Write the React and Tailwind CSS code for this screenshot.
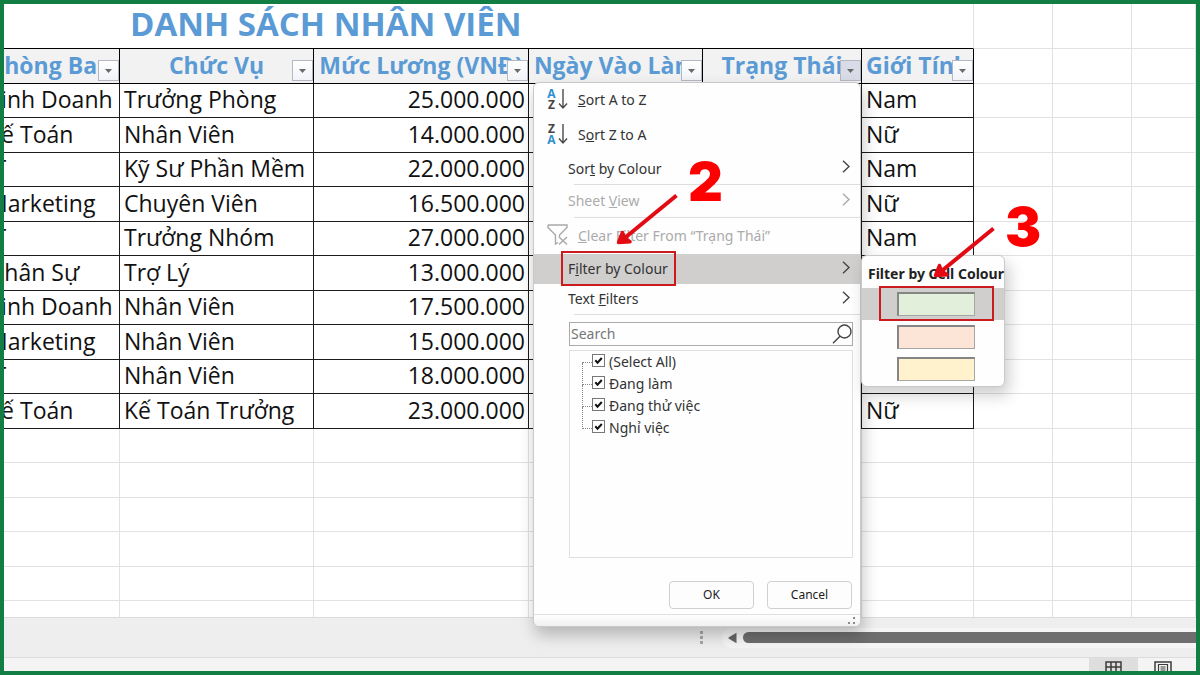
import React from "react";

const COLUMNS = [
  { label: "Phòng Ban", align: "pr-1 text-left" },
  { label: "Chức Vụ", align: "pr-1 text-left" },
  { label: "Mức Lương (VNĐ)", align: "pr-[3px] text-right" },
  { label: "Ngày Vào Làm", align: "pr-1 text-left" },
  { label: "Trạng Thái", align: "pr-1 text-left", active: true },
  { label: "Giới Tính", align: "pr-1 text-left" },
];

const ROWS = [
  ["Kinh Doanh", "Trưởng Phòng", "25.000.000", "", "", "Nam"],
  ["Kế Toán", "Nhân Viên", "14.000.000", "", "", "Nữ"],
  ["IT", "Kỹ Sư Phần Mềm", "22.000.000", "", "", "Nam"],
  ["Marketing", "Chuyên Viên", "16.500.000", "", "", "Nữ"],
  ["IT", "Trưởng Nhóm", "27.000.000", "", "", "Nam"],
  ["Nhân Sự", "Trợ Lý", "13.000.000", "", "", "Nữ"],
  ["Kinh Doanh", "Nhân Viên", "17.500.000", "", "", "Nam"],
  ["Marketing", "Nhân Viên", "15.000.000", "", "", "Nữ"],
  ["IT", "Nhân Viên", "18.000.000", "", "", "Nam"],
  ["Kế Toán", "Kế Toán Trưởng", "23.000.000", "", "", "Nữ"],
];

const STATUSES = ["(Select All)", "Đang làm", "Đang thử việc", "Nghỉ việc"];

function GridCells({ count }) {
  return Array.from({ length: count }, (_, i) => (
    <td key={i} className="border-r border-b border-[#e2e2e2] p-0" />
  ));
}

function FilterButton({ label, active }) {
  return (
    <button
      type="button"
      aria-label={`Filter ${label}`}
      className={`absolute right-0 bottom-[2px] flex h-[21px] w-[21px] items-center justify-center border border-[#b4b8c4] ${
        active ? "bg-[#d9dce6]" : "bg-linear-to-b from-white to-[#f1f3f8]"
      }`}
    >
      <svg width="7" height="4" viewBox="0 0 7 4" aria-hidden="true">
        <path d="M0 0h7L3.5 4z" fill="#6a6a6a" />
      </svg>
    </button>
  );
}

function Sheet() {
  return (
    <div className="min-h-0 flex-1 overflow-hidden bg-white">
      <table className="-ml-[21px] w-[calc(100%+21px)] table-fixed border-separate border-spacing-0 font-['Open_Sans',sans-serif] text-[23px] leading-[30px] whitespace-nowrap text-[#111]">
        <colgroup>
          <col className="w-[137px]" />
          <col className="w-[194px]" />
          <col className="w-[215px]" />
          <col className="w-[174px]" />
          <col className="w-[159px]" />
          <col className="w-[112px]" />
          <col className="w-[79px]" />
          <col className="w-[79px]" />
          <col />
        </colgroup>
        <thead>
          <tr className="h-[45px]">
            <th
              colSpan={6}
              className="border-r border-r-[#e2e2e2] border-b border-b-black p-0 pb-1 pl-[147px] text-left text-[33px] leading-10 font-bold text-[#5b9bd5]"
            >
              DANH SÁCH NHÂN VIÊN
            </th>
            <GridCells count={3} />
          </tr>
          <tr className="h-[35px]">
            {COLUMNS.map((c) => (
              <th
                key={c.label}
                className="relative border-r border-b border-black bg-[#f2f2f2] p-0 pb-[3px] text-center font-bold text-[#5b9bd5]"
              >
                {c.label}
                <FilterButton label={c.label} active={c.active} />
              </th>
            ))}
            <GridCells count={3} />
          </tr>
        </thead>
        <tbody>
          {ROWS.map((row, r) => (
            <tr key={r} className="odd:h-[34px] even:h-[35px]">
              {row.map((v, i) => (
                <td
                  key={i}
                  className={`border-r border-b border-[#1c1c1c] pt-0 pb-[3px] pl-1 ${COLUMNS[i].align}`}
                >
                  {v}
                </td>
              ))}
              <GridCells count={3} />
            </tr>
          ))}
          {[0, 1, 2, 3, 4, 5].map((r) => (
            <tr key={r} className="odd:h-[34px] even:h-[35px]">
              <GridCells count={9} />
            </tr>
          ))}
        </tbody>
      </table>
    </div>
  );
}

function BottomBars() {
  return (
    <>
      <div className="flex h-10 shrink-0 items-center border-t border-[#dcdcdc] bg-[#eeeeee]">
        <div className="flex w-[718px] shrink-0 justify-end pr-[19px]">
          <div className="flex flex-col gap-[2px]">
            <span className="h-[3px] w-[3px] bg-[#a8a8a8]" />
            <span className="h-[3px] w-[3px] bg-[#a8a8a8]" />
            <span className="h-[3px] w-[3px] bg-[#a8a8a8]" />
          </div>
        </div>
        <div className="flex h-5 flex-1 items-center gap-[6px] rounded-l-full bg-[#f5f5f5] pl-[6px]">
          <svg width="9" height="12" viewBox="0 0 9 12" aria-hidden="true">
            <path d="M8.5.8v10.4L.5 6.6V5.4z" fill="#666" />
          </svg>
          <div className="h-[11px] flex-1 rounded-l-full bg-[#6e6e6e]" />
        </div>
      </div>
      <div className="flex h-[14px] shrink-0 justify-end overflow-hidden border-t border-[#dcdcdc] bg-[#f4f4f4]">
        <button type="button" aria-label="Normal view" className="flex w-[49px] justify-center bg-[#dedede] pt-[3px]">
          <svg width="17" height="16" viewBox="0 0 17 16" fill="none" stroke="#3c3c3c" strokeWidth="1.5" aria-hidden="true">
            <path d="M1 1h15v14H1zM1 6h15M1 11h15M6 1v14M11 1v14" />
          </svg>
        </button>
        <button type="button" aria-label="Page layout" className="flex w-[58px] pt-[3px] pl-4">
          <svg width="18" height="16" viewBox="0 0 18 16" fill="none" stroke="#3c3c3c" aria-hidden="true">
            <path d="M1 1h16v14H1z" strokeWidth="1.5" />
            <path d="M4.5 15V3.5h9V15M6.5 6h5M6.5 8h5M6.5 10h5" strokeWidth="1.2" />
          </svg>
        </button>
      </div>
    </>
  );
}

function SortIcon({ top, bottom }) {
  const color = (c) => (c === "A" ? "text-[#2e8fd0]" : "text-[#444]");
  return (
    <span className="-mt-[3px] flex items-center gap-[2px]" aria-hidden="true">
      <span className="flex w-[9px] flex-col items-center font-['Open_Sans',sans-serif] text-[12px] leading-[11px] font-bold">
        <span className={color(top)}>{top}</span>
        <span className={color(bottom)}>{bottom}</span>
      </span>
      <svg width="10" height="22" viewBox="0 0 10 22" fill="none" stroke="#4a4a4a" strokeWidth="1.4">
        <path d="M5 1v19M1 15.500l4 4.500 4-4.500" />
      </svg>
    </span>
  );
}

function Chevron({ muted }) {
  return (
    <svg
      width="8"
      height="13"
      viewBox="0 0 8 13"
      fill="none"
      strokeWidth="1.4"
      className={`mr-[10px] ml-auto -mt-1 ${muted ? "stroke-[#a8a8a8]" : "stroke-[#444]"}`}
      aria-hidden="true"
    >
      <path d="M1 .8l6 5.700-6 5.700" />
    </svg>
  );
}

function MenuItem({ icon, height, muted, chevron, selected, children }) {
  return (
    <button
      type="button"
      disabled={muted}
      className={`flex w-full items-center text-left ${height} ${muted ? "text-[#ababab]" : "text-[#333]"} ${
        selected ? "bg-[#d1cfce]" : ""
      }`}
    >
      {icon ? <span className="flex w-[44px] shrink-0 pl-[13px]">{icon}</span> : <span className="w-[34px] shrink-0" />}
      <span>{children}</span>
      {chevron && <Chevron muted={muted} />}
    </button>
  );
}

function Separator() {
  return <hr className="ml-10 border-t border-[#dedede]" />;
}

function FilterMenu() {
  return (
    <div className="absolute top-[78px] left-[529px] w-[328px] rounded-md border border-[#c9c9c9] bg-[#fefefe] font-['Noto_Sans',sans-serif] text-[14px] leading-5 whitespace-nowrap shadow-[2px_8px_16px_rgba(0,0,0,0.24)]">
      <MenuItem height="h-[34px]" icon={<SortIcon top="A" bottom="Z" />}>
        <u>S</u>ort A to Z
      </MenuItem>
      <MenuItem height="h-[36px]" icon={<SortIcon top="Z" bottom="A" />}>
        S<u>o</u>rt Z to A
      </MenuItem>
      <MenuItem height="h-[31px]" chevron>
        Sor<u>t</u> by Colour
      </MenuItem>
      <Separator />
      <MenuItem height="h-[32px]" chevron muted>
        Sheet <u>V</u>iew
      </MenuItem>
      <Separator />
      <MenuItem
        height="h-[36px]"
        muted
        icon={
          <svg width="22" height="22" viewBox="0 0 22 22" fill="none" stroke="#a8a8a8" strokeWidth="1.4" className="-mt-[2px]" aria-hidden="true">
            <path d="M1 1h19v2.500l-7.500 7.500v3M1 1v2.500l7.500 7.500v9l2.500-1.500M12 13l8 7.500M20 13l-8 7.500" />
          </svg>
        }
      >
        <u>C</u>lear Filter From “Trạng Thái”
      </MenuItem>
      <MenuItem height="h-[30px]" chevron selected>
        F<u>i</u>lter by Colour
      </MenuItem>
      <MenuItem height="h-[30px]" chevron>
        Text <u>F</u>ilters
      </MenuItem>
      <Separator />
      <div className="mt-[7px] mr-[7px] ml-[35px] flex h-6 items-center border border-[#ababab]">
        <input
          type="text"
          aria-label="Search"
          placeholder="Search"
          className="w-full min-w-0 flex-1 bg-transparent pl-px text-[#333] outline-none placeholder:text-[#767676]"
        />
        <svg width="20" height="20" viewBox="0 0 20 20" fill="none" stroke="#444" strokeWidth="1.4" aria-hidden="true">
          <circle cx="12.500" cy="7.500" r="6.500" />
          <path d="M8 12.200L1 19.300" />
        </svg>
      </div>
      <ul className="mt-1 mr-[7px] ml-[35px] h-[208px] border border-[#e0e0e0] pl-3">
        {STATUSES.map((s, i) => (
          <li key={s} className="flex h-[22px] items-center">
            <span
              className={`w-[10px] self-start border-b border-dotted border-[#888] ${
                i === 0 ? "h-3" : "-mt-[10px] h-[22px] border-l"
              }`}
            />
            <label className="flex items-center gap-1">
              <span className="-mt-1 grid">
                <input
                  type="checkbox"
                  defaultChecked
                  className="peer col-start-1 row-start-1 h-[13px] w-[13px] appearance-none border border-[#777] bg-white"
                />
                <svg
                  viewBox="0 0 13 13"
                  className="pointer-events-none invisible col-start-1 row-start-1 h-[13px] w-[13px] peer-checked:visible"
                  aria-hidden="true"
                >
                  <path d="M3.300 6.300l2.200 2.400 4.300-4.700" fill="none" stroke="#111" strokeWidth="2" />
                </svg>
              </span>
              <span className="text-[#333]">{s}</span>
            </label>
          </li>
        ))}
      </ul>
      <div className="mt-[23px] mr-2 flex justify-end gap-[13px] text-[12px] text-[#1c1c1c]">
        <button type="button" className="h-7 w-[85px] rounded border border-[#d0d0d0] bg-[#fdfdfd]">
          OK
        </button>
        <button type="button" className="h-7 w-[85px] rounded border border-[#d0d0d0] bg-[#fdfdfd]">
          Cancel
        </button>
      </div>
      <div className="mt-[5px] flex h-3 items-end justify-end rounded-b-md border-t border-[#e0e0e0] bg-linear-to-b from-white to-[#f0f0f0] pr-1 pb-[2px]">
        <svg width="8" height="7" viewBox="0 0 8 7" fill="#8a8a8a" aria-hidden="true">
          <path d="M5 0h2v2H5zM0 5h2v2H0zM5 5h2v2H5z" />
        </svg>
      </div>
    </div>
  );
}

function Swatch({ label, color, className }) {
  return (
    <button type="button" aria-label={label} className={`flex w-full items-center pl-[35px] ${className}`}>
      <span
        className={`h-6 w-[78px] border-t-2 border-r border-b border-l-2 border-t-[#858585] border-r-[#a6a6a6] border-b-[#a6a6a6] border-l-[#858585] ${color}`}
      />
    </button>
  );
}

function ColourMenu() {
  return (
    <div className="absolute top-[251px] left-[857px] w-[144px] rounded-md border border-[#c9c9c9] bg-[#fefefe] pb-px font-['Noto_Sans',sans-serif] shadow-[4px_8px_16px_rgba(0,0,0,0.2)]">
      <p className="flex h-8 items-center pt-1 pl-[6px] text-[14px] leading-5 font-bold whitespace-nowrap text-[#222]">
        Filter by Cell Colour
      </p>
      <Swatch label="Green" color="bg-[#e2efda]" className="h-8 bg-[#d1cfce]" />
      <Swatch label="Orange" color="bg-[#fce4d6]" className="h-[33px]" />
      <Swatch label="Yellow" color="bg-[#fff2cc]" className="h-8" />
    </div>
  );
}

function Arrow({ className }) {
  return (
    <svg width="64" height="56" viewBox="0 0 64 56" fill="none" stroke="#e30b13" className={className} aria-hidden="true">
      <path d="M61.500 2.500L6 48" strokeWidth="4" />
      <path d="M7.500 39.500L3.500 49.500 15 48.800L9.500 45z" strokeWidth="3.500" strokeLinejoin="round" fill="#e30b13" />
    </svg>
  );
}

function Annotations() {
  return (
    <div className="pointer-events-none font-['Inter',sans-serif] text-[54px] leading-[54px] font-black text-[#fe0000]">
      <div className="absolute top-[247px] left-[557px] h-[35px] w-[115px] border-2 border-[#cb1b1f]" />
      <div className="absolute top-[282px] left-[875px] h-[35px] w-[115px] border-2 border-[#cb1b1f]" />
      <Arrow className="absolute top-[189px] left-[611px]" />
      <Arrow className="absolute top-[222px] left-[928px]" />
      <span className="absolute top-[151px] left-[684px]">2</span>
      <span className="absolute top-[196px] left-[1001px]">3</span>
    </div>
  );
}

export default function App() {
  return (
    <div className="h-screen w-full border-4 border-[#137e43] bg-white">
      <main className="relative flex h-full w-full flex-col overflow-hidden">
        <Sheet />
        <BottomBars />
        <FilterMenu />
        <ColourMenu />
        <Annotations />
      </main>
    </div>
  );
}
